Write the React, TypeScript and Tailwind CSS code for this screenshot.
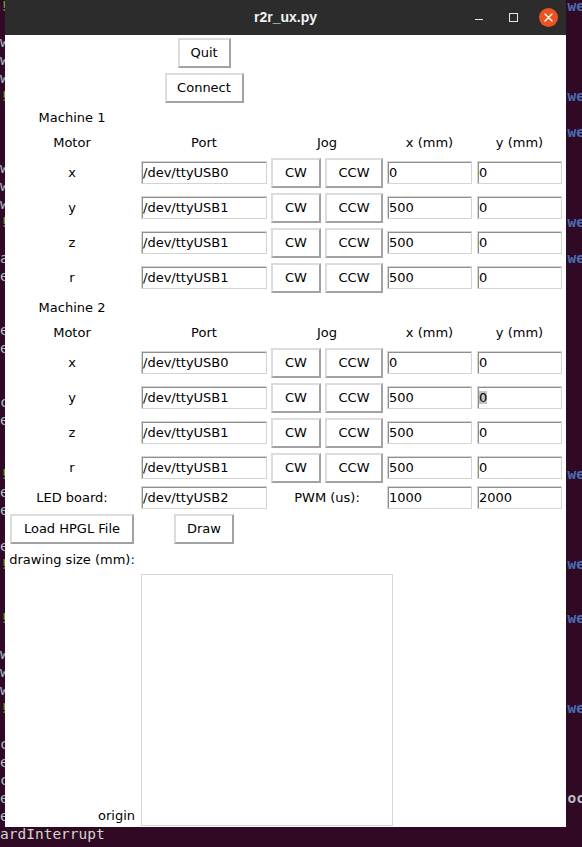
import React from "react";

type TermLine = { left?: string; leftColor?: string; right?: string; rightColor?: string; text?: string };

const GREEN = "#76a12b";
const GREY = "#b9bcc4";
const BLUE = "#4a6db5";

const termLines: TermLine[] = Array.from({ length: 47 }, () => ({}));
const mark = (i: number, left: string, color: string) => {
  termLines[i].left = left;
  termLines[i].leftColor = color;
};
[0, 5, 12, 26, 31, 34, 39].forEach((i) => mark(i, "!", GREEN));
[2, 3, 4, 9, 10, 11, 36, 37, 38].forEach((i) => mark(i, "w", GREY));
[15, 18, 19, 23, 27, 28, 30, 42, 44, 45].forEach((i) => mark(i, "e", GREY));
[22, 41, 43].forEach((i) => mark(i, "c", GREY));
mark(14, "a", GREY);
[0, 5, 7, 12, 14, 26, 31, 34, 39].forEach((i) => {
  termLines[i].right = "were";
  termLines[i].rightColor = BLUE;
});
termLines[44].right = "occurred";
termLines[44].rightColor = GREY;
termLines[46].text = "ardInterrupt";

function Terminal() {
  return (
    <div className="-mt-[3px] font-['DejaVu_Sans_Mono',monospace] text-[14.5px]">
      {termLines.map((l, i) => (
        <div key={i} className="h-[18px] leading-[18px] whitespace-pre">
          {l.text ? (
            <span className="text-[#d3d7cf]">{l.text}</span>
          ) : (
            <>
              <span style={{ color: l.leftColor }}>{l.left ?? " "}</span>
              {" ".repeat(64)}
              {l.right && (
                <span className="font-bold" style={{ color: l.rightColor }}>
                  {l.right}
                </span>
              )}
            </>
          )}
        </div>
      ))}
    </div>
  );
}

function TkButton({ label, width }: { label: string; width: string }) {
  return (
    <div
      className={`${width} h-[30px] flex items-center justify-center border-2 border-t-[#dcdcdc] border-l-[#dcdcdc] border-r-[#a2a2a2] border-b-[#a2a2a2] bg-white`}
    >
      {label}
    </div>
  );
}

function TkEntry({ value, width, selected }: { value: string; width: string; selected?: boolean }) {
  return (
    <div
      className={`${width} h-[23px] flex items-center pl-[1px] border border-[#d4d4d4] shadow-[inset_1px_1px_0_#8e8e8e] bg-white leading-none`}
    >
      {selected ? <span className="bg-[#c4c4c4]">{value}</span> : value}
    </div>
  );
}

type Motor = { name: string; port: string; x: string; y: string; sel?: boolean };

function MotorRow({ m }: { m: Motor }) {
  return (
    <>
      <div>{m.name}</div>
      <TkEntry value={m.port} width="w-[126px]" />
      <TkButton label="CW" width="w-[50px]" />
      <TkButton label="CCW" width="w-[58px]" />
      <TkEntry value={m.x} width="w-[85px]" />
      <TkEntry value={m.y} width="w-[85px]" selected={m.sel} />
    </>
  );
}

function Header() {
  return (
    <>
      <div>Motor</div>
      <div>Port</div>
      <div className="col-span-2">Jog</div>
      <div>x (mm)</div>
      <div>y (mm)</div>
    </>
  );
}

const machine1: Motor[] = [
  { name: "x", port: "/dev/ttyUSB0", x: "0", y: "0" },
  { name: "y", port: "/dev/ttyUSB1", x: "500", y: "0" },
  { name: "z", port: "/dev/ttyUSB1", x: "500", y: "0" },
  { name: "r", port: "/dev/ttyUSB1", x: "500", y: "0" },
];
const machine2: Motor[] = [
  { name: "x", port: "/dev/ttyUSB0", x: "0", y: "0" },
  { name: "y", port: "/dev/ttyUSB1", x: "500", y: "0", sel: true },
  { name: "z", port: "/dev/ttyUSB1", x: "500", y: "0" },
  { name: "r", port: "/dev/ttyUSB1", x: "500", y: "0" },
];

function TitleBar() {
  return (
    <div className="h-[35px] bg-[#2c2c2c] grid grid-cols-[1fr_auto_1fr] items-center">
      <div />
      <div className="font-['Liberation_Sans',sans-serif] font-bold text-[14px] text-[#f2f2f2]">r2r_ux.py</div>
      <div className="flex items-center justify-end pr-[8px]">
        <div className="w-[8px] h-[1.5px] bg-[#e6e6e6] mt-[4px]" />
        <div className="w-[9px] h-[9px] border-[1.5px] border-[#e6e6e6] ml-[26px]" />
        <div className="w-[19px] h-[19px] rounded-full bg-[#e95420] ml-[21px] flex items-center justify-center">
          <svg width="9" height="9" viewBox="0 0 9 9">
            <path d="M1 1L8 8M8 1L1 8" stroke="#fff" strokeWidth="1.4" strokeLinecap="round" />
          </svg>
        </div>
      </div>
    </div>
  );
}

export default function App() {
  return (
    <div className="relative w-[582px] h-[847px] overflow-hidden bg-[#300a24]">
      <Terminal />
      <div className="absolute left-[5px] top-0 w-[561px] h-[827px] flex flex-col">
        <TitleBar />
        <div className="flex-1 bg-white text-black font-['DejaVu_Sans',sans-serif] text-[13px] grid grid-cols-[134px_130px_54px_62px_89px_91px] grid-rows-[35px_35px_25px_25px_35px_35px_35px_35px_25px_25px_35px_35px_35px_35px_25px_38px_23px_256px] items-center justify-items-center">
          <div />
          <TkButton label="Quit" width="w-[53px]" />
          <div className="col-span-4" />

          <div />
          <TkButton label="Connect" width="w-[79px]" />
          <div className="col-span-4" />

          <div>Machine 1</div>
          <div className="col-span-5" />
          <Header />
          {machine1.map((m) => (
            <MotorRow key={"a" + m.name} m={m} />
          ))}

          <div>Machine 2</div>
          <div className="col-span-5" />
          <Header />
          {machine2.map((m) => (
            <MotorRow key={"b" + m.name} m={m} />
          ))}

          <div>LED board:</div>
          <TkEntry value="/dev/ttyUSB2" width="w-[126px]" />
          <div className="col-span-2">PWM (us):</div>
          <TkEntry value="1000" width="w-[85px]" />
          <TkEntry value="2000" width="w-[85px]" />

          <TkButton label="Load HPGL File" width="w-[124px]" />
          <TkButton label="Draw" width="w-[60px]" />
          <div className="col-span-4" />

          <div>drawing size (mm):</div>
          <div className="col-span-5" />

          <div className="self-end justify-self-end pr-[4px] pb-[2px]">origin</div>
          <div className="col-span-5 self-start justify-self-start ml-[2px] mt-[3px] w-[252px] h-[252px] border border-[#d6d6d6] bg-white" />
        </div>
      </div>
    </div>
  );
}
